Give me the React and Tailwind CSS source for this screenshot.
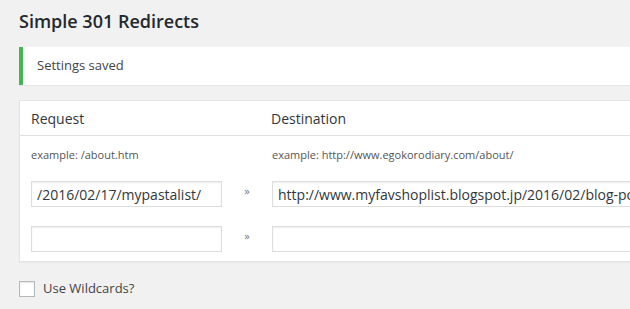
const rows = [
  { from: "/2016/02/17/mypastalist/", to: "http://www.myfavshoplist.blogspot.jp/2016/02/blog-post.html" },
  { from: "", to: "" },
];

function App() {
  return (
    <div className="h-[309px] w-[630px] overflow-hidden bg-[#f1f1f1] font-['Open_Sans',sans-serif] text-[#444]">
      <div className="w-[900px] pl-[19px]">
        <h2 className="pt-[8px] text-[18px] font-semibold leading-[26px] text-[#23282d]">
          Simple 301 Redirects
        </h2>

        <div className="mt-[13px] flex h-[38px] items-center border-l-4 border-[#46b450] bg-white pl-[14px] text-[13px] shadow-[0_1px_1px_rgba(0,0,0,0.04)]">
          Settings saved
        </div>

        <div className="mt-[15px] border border-[#e5e5e5] bg-white shadow-[0_1px_1px_rgba(0,0,0,0.04)]">
          <div className="flex h-[35px] items-center border-b border-[#e1e1e1] pl-[11px] text-[14px] text-[#32373c]">
            <div className="w-[240px]">Request</div>
            <div>Destination</div>
          </div>

          <div className="pb-[9px] pl-[11px] pt-[11px]">
            <div className="flex text-[11px] leading-[16px] text-[#555]">
              <div className="w-[241px]">example: /about.htm</div>
              <div>example: http://www.egokorodiary.com/about/</div>
            </div>

            <div className="mt-[18px] flex flex-col gap-[19px]">
              {rows.map((row, i) => (
                <div key={i} className="flex items-center">
                  <input
                    readOnly
                    value={row.from}
                    className="h-[26px] w-[191px] border border-[#ddd] bg-white px-[5px] text-[14px] text-[#32373c] shadow-[inset_0_1px_2px_rgba(0,0,0,0.07)] outline-none"
                  />
                  <div className="mb-[6px] flex w-[50px] justify-center text-[11px] text-[#72777c]">»</div>
                  <input
                    readOnly
                    value={row.to}
                    className="h-[26px] w-[500px] border border-[#ddd] bg-white px-[5px] text-[14px] text-[#32373c] shadow-[inset_0_1px_2px_rgba(0,0,0,0.07)] outline-none"
                  />
                </div>
              ))}
            </div>
          </div>
        </div>

        <label className="mt-[17px] flex items-center gap-[8px] text-[13px] text-[#444]">
          <span className="h-[16px] w-[16px] border border-[#b4b9be] bg-white shadow-[inset_0_1px_2px_rgba(0,0,0,0.1)]" />
          Use Wildcards?
        </label>
      </div>
    </div>
  );
}

export default App;
